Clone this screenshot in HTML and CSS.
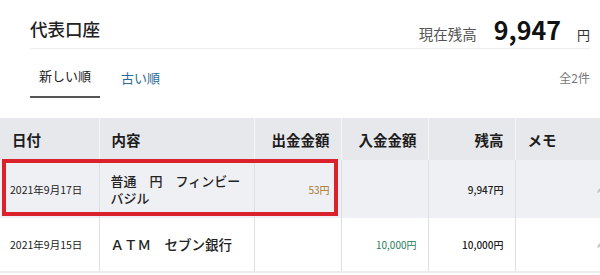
FILE: index.html
```html
<!DOCTYPE html>
<html lang="ja">
<head>
	<meta charset="UTF-8">
	<title>代表口座</title>
	<link rel="stylesheet" href="styles.css">
</head>
<body>
	<div class="account_head">
		<h1>代表口座</h1>
		<div class="balance">
			<span class="balance_label">現在残高</span>
			<span class="balance_value">9,947</span>
			<span class="balance_unit">円</span>
		</div>
	</div>
	<div class="tabs">
		<button class="tab active">新しい順</button>
		<button class="tab">古い順</button>
		<span class="count">全2件</span>
	</div>
	<div class="table_wrap">
		<table class="history">
			<colgroup>
				<col style="width:99px">
				<col style="width:155px">
				<col style="width:87px">
				<col style="width:87px">
				<col style="width:87px">
				<col>
			</colgroup>
			<thead>
				<tr>
					<th>日付</th>
					<th>内容</th>
					<th class="num">出金金額</th>
					<th class="num">入金金額</th>
					<th class="num">残高</th>
					<th>メモ</th>
				</tr>
			</thead>
			<tbody>
				<tr class="shaded tall">
					<td class="date">2021年9月17日</td>
					<td class="desc">普通　円　フィンビー<br>バジル</td>
					<td class="num out">53円</td>
					<td class="num"></td>
					<td class="num bal">9,947円</td>
					<td class="memo"><svg class="pen" width="8" height="8" viewBox="0 0 8 8"><path d="M1 7 L2 4 L6 0 L8 2 L4 6 Z" fill="#c8c9cc"/></svg></td>
				</tr>
				<tr>
					<td class="date">2021年9月15日</td>
					<td class="desc wide">ＡＴＭ　セブン銀行</td>
					<td class="num"></td>
					<td class="num in">10,000円</td>
					<td class="num bal">10,000円</td>
					<td class="memo"><svg class="pen" width="8" height="8" viewBox="0 0 8 8"><path d="M1 7 L2 4 L6 0 L8 2 L4 6 Z" fill="#c8c9cc"/></svg></td>
				</tr>
			</tbody>
		</table>
		<div class="highlight"></div>
	</div>
</body>
</html>
```

FILE: styles.css
```css
* {
	margin: 0;
	padding: 0;
	box-sizing: border-box;
}
html, body {
	width: 100%;
	height: 100%;
	background: #FFF;
	color: #222;
	font-family: "Noto Sans CJK JP", "Noto Sans", sans-serif;
}
body {
	overflow: hidden;
}
.account_head {
	display: flex;
	justify-content: space-between;
	align-items: center;
	height: 49px;
	margin: 0 10px 0 30px;
	border-bottom: 1px solid #eeeeee;
	padding-top: 8px;
}
.account_head h1 {
	font-size: 17.5px;
	font-weight: 500;
}
.balance {
	display: flex;
	align-items: baseline;
	padding-top: 1px;
}
.balance_label {
	font-size: 14.5px;
	color: #555;
}
.balance_value {
	font-size: 25px;
	font-weight: bold;
	margin: 0 16px 0 17px;
	color: #111;
}
.balance_unit {
	font-size: 13px;
	color: #333;
}

.tabs {
	display: flex;
	align-items: stretch;
	height: 50px;
	margin: 0 10px 0 30px;
}
.tab {
	all: unset;
	display: flex;
	align-items: center;
	justify-content: center;
	font-size: 13px;
	padding-top: 7px;
	color: #2d6c98;
	cursor: pointer;
}
.tab.active {
	width: 70px;
	color: #222;
	border-bottom: 2px solid #555;
	margin-bottom: 1px;
	padding-top: 6px;
}
.tab + .tab {
	margin-left: 21px;
}
.count {
	margin-left: auto;
	align-self: center;
	font-size: 12px;
	color: #777;
	padding-top: 7px;
}

.table_wrap {
	position: relative;
	margin-top: 19px;
}
.history {
	width: 100%;
	table-layout: fixed;
	border-collapse: collapse;
}
.history th {
	height: 42px;
	background: #e7e8eb;
	font-size: 14.5px;
	font-weight: bold;
	text-align: left;
	padding: 0 12px;
	border-left: 1px solid #f6f6f7;
	color: #1d1d1d;
}
.history th:first-child {
	border-left: 0;
}
.history td {
	height: 54px;
	font-size: 10.5px;
	padding: 0 12px;
	border-left: 1px solid #dedfe2;
	border-bottom: 2px solid #ebecee;
	vertical-align: middle;
}
.history td:first-child {
	border-left: 0;
	padding-left: 10px;
}
.history tr.tall td {
	height: 58px;
	border-bottom: 0;
}
.history tr.shaded td {
	background: #eff0f3;
}
.history .num {
	text-align: right;
}
.history th.num {
	padding-right: 11px;
}
.history td.num {
	padding-right: 11px;
}
.history .desc {
	font-size: 13px;
	font-weight: 500;
	line-height: 17px;
	padding-left: 11px;
}
.history .desc.wide {
	font-size: 13.5px;
}
.history .out {
	color: #a8752e;
	font-size: 10px;
}
.history .in {
	color: #2b7a5c;
	font-size: 10px;
}
.history .bal {
	font-weight: 500;
	font-size: 10px;
}
.history .memo {
	text-align: right;
	padding-right: 0;
}
.pen {
	margin-right: -4px;
}

.highlight {
	position: absolute;
	left: 2px;
	top: 41px;
	width: 336px;
	height: 57px;
	border: 4px solid #d9222c;
	pointer-events: none;
}
```
